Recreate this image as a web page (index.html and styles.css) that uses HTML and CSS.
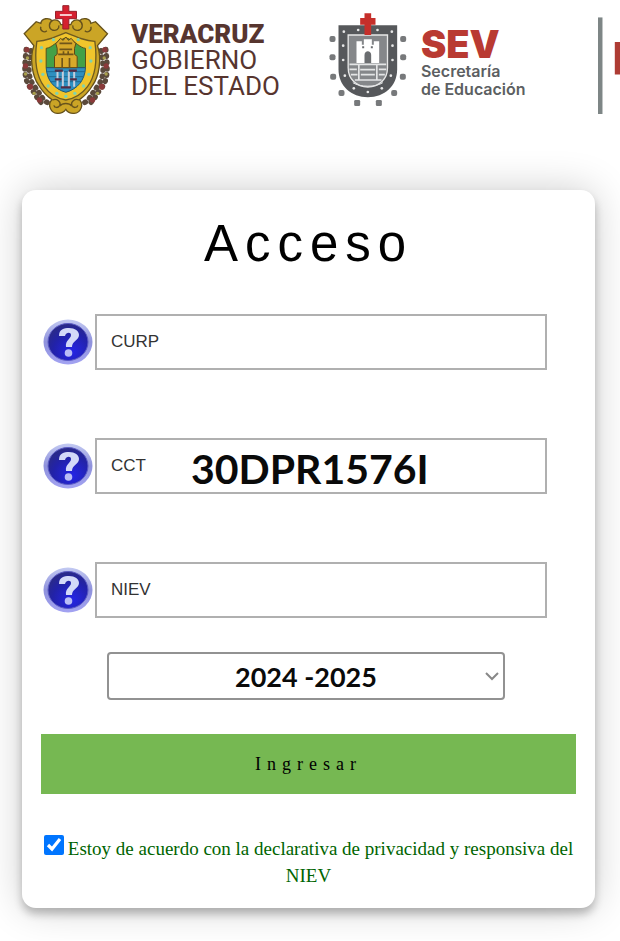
FILE: index.html
```html
<!DOCTYPE html>
<html lang="es">
<head>
	<meta charset="UTF-8">
	<meta name="viewport" content="width=device-width, initial-scale=1.0">
	<title>Acceso</title>
	<link rel="stylesheet" href="styles.css">
</head>
<body>
	<svg class="defs" aria-hidden="true">
		<defs>
			<radialGradient id="help_fill" cx="0.6" cy="0.75" r="0.8">
				<stop offset="0" stop-color="#2424e6"/>
				<stop offset="0.6" stop-color="#2222a8"/>
				<stop offset="1" stop-color="#2c2c80"/>
			</radialGradient>
			<linearGradient id="help_rim" x1="0" y1="0" x2="0" y2="1">
				<stop offset="0" stop-color="#c3caf2"/>
				<stop offset="0.5" stop-color="#8f92dc"/>
				<stop offset="1" stop-color="#a3a3f2"/>
			</linearGradient>
			<symbol id="help" viewBox="0 0 50 46">
				<ellipse cx="25" cy="23" rx="24.5" ry="22.5" fill="url(#help_rim)"/>
				<ellipse cx="25" cy="23" rx="20" ry="18.5" fill="url(#help_fill)" stroke="#5a5ac4"/>
				<path d="M16 17c0-7 5-8 10-8 6 0 10 3 10 7 0 5-7 6-7 12h-6c-1-7 5-8 5-12 0-3-5-3-6 1z" fill="#d3d9f8"/>
				<circle cx="25.500" cy="34" r="3.800" fill="#b9bdf6"/>
			</symbol>
		</defs>
	</svg>
	<header class="header">
		<svg class="crest_state" viewBox="60 12 272 336" role="img" aria-label="Escudo de Veracruz">
			<!-- side flowers -->
			<g fill="none" stroke="#5b4a3c" stroke-width="16" stroke-linecap="round" stroke-dasharray="2 17">
				<path d="M78 148C74 190 68 235 90 262S112 304 136 316"/>
				<path d="M317 148C321 190 327 235 305 262S283 304 259 316"/>
				<path d="M92 152C86 190 80 230 102 258S122 294 142 308"/>
				<path d="M303 152C309 190 315 230 293 258S273 294 253 308"/>
			</g>
			<g fill="#8a3a3a">
				<circle cx="80" cy="149" r="8"/><circle cx="76" cy="198" r="8"/><circle cx="90" cy="260" r="9"/><circle cx="118" cy="300" r="8"/>
				<circle cx="314" cy="149" r="8"/><circle cx="318" cy="198" r="8"/><circle cx="305" cy="260" r="9"/><circle cx="277" cy="300" r="8"/>
			</g>
			<g fill="#a9a04c">
				<circle cx="82" cy="174" r="5"/><circle cx="76" cy="222" r="5"/><circle cx="102" cy="280" r="5"/>
				<circle cx="312" cy="174" r="5"/><circle cx="318" cy="222" r="5"/><circle cx="292" cy="280" r="5"/>
			</g>
			<!-- frame -->
			<g fill="#cba526" stroke="#66521c" stroke-width="4">
				<path d="M72 101 108 65l14 5c2-16 24-18 34-8 10-6 24 0 26 12h30c2-12 16-18 26-12 10-10 32-8 34 8l14-5 36 36-30 36c14 40 4 92-14 118-12 20-26 34-40 44 14 14 4 40-16 41-12 1-20-4-25-12-6 8-14 13-26 12-20-1-30-27-16-41-14-10-28-24-40-44-18-26-28-78-14-118z"/>
				<path d="M122 80c-4 12 10 20 18 12M272 80c4 12-10 20-18 12M156 62c-12 8-10 24 0 28 12 4 22-4 20-14M238 62c12 8 10 24 0 28-12 4-22-4-20-14" fill="none"/>
				<path d="M157 300c14-6 26 6 22 16-4 9-16 8-18 0M237 300c-14-6-26 6-22 16 4 9 16 8 18 0M179 318c8-10 28-10 36 0" fill="none"/>
			</g>
			<path d="M110 124c28-2 48-10 87-26 39 16 59 24 87 26 8 58 2 104-22 136-18 24-40 36-65 40-25-4-47-16-65-40-24-32-30-78-22-136z" fill="#f0c52c" stroke="#6e5b20" stroke-width="4"/>
			<g fill="#7ed2b0">
				<circle cx="124" cy="143" r="5"/><circle cx="122" cy="183" r="5"/><circle cx="128" cy="223" r="5"/><circle cx="144" cy="258" r="5"/><circle cx="170" cy="280" r="5"/>
				<circle cx="270" cy="143" r="5"/><circle cx="272" cy="183" r="5"/><circle cx="266" cy="223" r="5"/><circle cx="250" cy="258" r="5"/><circle cx="224" cy="280" r="5"/>
				<circle cx="160" cy="119" r="5"/><circle cx="234" cy="119" r="5"/><circle cx="197" cy="289" r="5"/>
			</g>
			<path d="M138 203V145c18-2 28-20 59-32 31 12 41 30 59 32v58z" fill="#43a047" stroke="#54501c" stroke-width="3"/>
			<path d="M138 203h118c-2 38-24 64-59 74-35-10-57-36-59-74z" fill="#2f8fc0" stroke="#24566e" stroke-width="3"/>
			<path d="M140 215h114M143 230h108M150 245h94" stroke="#1e6b94" stroke-width="3"/>
			<path d="M163 203v-34l8-6v-18l-4-14 14-16 8 6 8-10 8 10 8-6 14 16-4 14v18l8 6v34z" fill="#d8a92a" stroke="#5f4717" stroke-width="3"/>
			<path d="M178 130h38M178 148h38M174 163h46M186 174v28M208 174v28M190 154v12M204 154v12" stroke="#705519" stroke-width="5"/>
			<path d="M172 216v44M222 216v44M188 214v50M206 214v50" stroke="#c5cddc" stroke-width="6"/>
			<path d="M164 212h24M206 212h24M164 238h20M210 238h20M182 262h30" stroke="#552c45" stroke-width="7"/>
			<path d="M188 17h18v17h23v22h-23v31h-18V56h-22V34h22z" fill="#d5202f" stroke="#96202a" stroke-width="3"/>
			<path d="M179 45h36" stroke="#f7c9cb" stroke-width="6"/>
		</svg>
		<p class="brand_state"><strong>VERACRUZ</strong><br>GOBIERNO<br>DEL ESTADO</p>
		<svg class="crest_sev" viewBox="54 28 236 288" role="img" aria-label="Escudo SEV">
			<g fill="#77797b">
				<rect x="58" y="100" width="18" height="18" rx="6"/><rect x="58" y="155" width="18" height="18" rx="6"/><rect x="60" y="213" width="18" height="18" rx="6"/>
				<rect x="85" y="262" width="18" height="18" rx="6"/><rect x="132" y="292" width="18" height="18" rx="4"/><rect x="197" y="292" width="18" height="18" rx="4"/>
				<rect x="243" y="262" width="18" height="18" rx="6"/><rect x="269" y="213" width="18" height="18" rx="6"/><rect x="270" y="155" width="18" height="18" rx="6"/><rect x="270" y="100" width="18" height="18" rx="6"/>
			</g>
			<path d="M85 68h176v132c0 50-38 84-88 84s-88-34-88-84z" fill="#56585b"/>
			<path d="M114 97h118v98c0 34-25 58-59 58s-59-24-59-58z" fill="#85878a" stroke="#e8e8e8" stroke-width="4"/>
			<path d="M139 181v-65h16v10h6v-16h24v16h6v-10h16v65z" fill="#fff"/>
			<path d="M163 181v-24c0-15 20-15 20 0v24z" fill="#6b6d70"/>
			<path d="M156 134h6M182 134h6" stroke="#6b6d70" stroke-width="6"/>
			<path d="M118 185h110M118 200h22M150 201h45M206 200h22M122 216h20M152 216h42M206 216h18M134 232h80M146 183v48M200 183v48" stroke="#e4e5e6" stroke-width="5"/>
			<path d="M128 240c20 14 70 14 90 0" fill="none" stroke="#e4e5e6" stroke-width="3"/>
			<g fill="#e8e8e8">
				<circle cx="101" cy="87" r="4"/><circle cx="144" cy="82" r="4"/><circle cx="202" cy="82" r="4"/><circle cx="245" cy="87" r="4"/>
				<circle cx="99" cy="129" r="4"/><circle cx="99" cy="172" r="4"/><circle cx="104" cy="219" r="4"/><circle cx="131" cy="257" r="4"/><circle cx="173" cy="268" r="4"/>
				<circle cx="247" cy="129" r="4"/><circle cx="247" cy="172" r="4"/><circle cx="242" cy="219" r="4"/><circle cx="215" cy="257" r="4"/>
			</g>
			<path d="M163 32h20v14h13v20h-13v31h-20V66h-13V46h13z" fill="#c52f2a"/>
		</svg>
		<p class="brand_sev"><strong>SEV</strong>Secretaría<br>de Educación</p>
		<svg class="brand_next" viewBox="0 0 20 108" preserveAspectRatio="xMinYMid slice" aria-hidden="true">
			<path d="M0 16h4v92H0z" fill="#7e8686"/>
			<path d="M15 38h45v29H15z" fill="#ae3c34"/>
		</svg>
	</header>

	<main class="card">
		<form class="form">
			<h1>Acceso</h1>
			<div class="row">
				<button type="button" class="help" aria-label="Ayuda CURP"><svg><use href="#help"/></svg></button>
				<div class="field">
					<label for="curp">CURP</label>
					<input type="text" id="curp">
				</div>
			</div>
			<div class="row">
				<button type="button" class="help" aria-label="Ayuda CCT"><svg><use href="#help"/></svg></button>
				<div class="field">
					<label for="cct">CCT</label>
					<input type="text" id="cct" value="30DPR1576I">
				</div>
			</div>
			<div class="row">
				<button type="button" class="help" aria-label="Ayuda NIEV"><svg><use href="#help"/></svg></button>
				<div class="field">
					<label for="niev">NIEV</label>
					<input type="text" id="niev">
				</div>
			</div>
			<div class="cycle">
				<select id="cycle" aria-label="Ciclo escolar">
					<option>2024 -2025</option>
				</select>
				<svg class="chevron" viewBox="0 0 14 9" aria-hidden="true"><path d="M1 1l6 6 6-6"/></svg>
			</div>
			<button type="submit" class="submit">Ingresar</button>
			<div class="terms">
				<input type="checkbox" id="terms" checked><label for="terms">Estoy de acuerdo con la declarativa de privacidad y responsiva del NIEV</label>
			</div>
		</form>
	</main>
</body>
</html>
```
FILE: styles.css
```css
* {
	box-sizing: border-box;
	margin: 0;
	padding: 0;
}
body {
	background: #fff;
	font-family: "Liberation Serif", serif;
}
.defs {
	display: block;
	width: 0;
	height: 0;
}

.header {
	display: flex;
	align-items: center;
	padding: 4px 0 0 20px;
}
.header > * {
	flex-shrink: 0;
}
.crest_state {
	width: 91px;
	height: 112px;
}
.brand_state {
	margin: 0 48px 0 20px;
	font: 26px/26px Roboto, sans-serif;
	color: #57352f;
}
.brand_state strong {
	font-weight: 900;
}
.crest_sev {
	width: 79px;
	height: 96px;
}
.brand_sev {
	margin: 4px 72px 0 14px;
	font: 600 16px/18px Inter, sans-serif;
	color: #5c5f62;
}
.brand_sev strong {
	display: block;
	font-size: 38px;
	line-height: 36px;
	font-weight: 900;
	color: #b93a32;
}
.header .brand_next {
	flex: 1 1 0;
	min-width: 0;
	max-width: 60px;
	height: 108px;
}

.card {
	margin: 74px 25px 32px 22px;
	padding: 24px 19px 19px;
	background: #fff;
	border-radius: 14px;
	box-shadow: 0 0 40px rgba(0, 0, 0, 0.2), 0 6px 8px rgba(0, 0, 0, 0.24);
}
.form {
	display: flex;
	flex-direction: column;
}
h1 {
	margin-bottom: 40px;
	font: 51px/60px "Liberation Sans", sans-serif;
	letter-spacing: 7px;
	text-align: center;
	color: #000;
}
.row {
	display: flex;
	align-items: center;
	gap: 2px;
	margin: 0 29px 68px 2px;
}
.help {
	border: 0;
	background: none;
	cursor: pointer;
}
.help svg {
	display: block;
	width: 50px;
	height: 46px;
}
.field {
	display: flex;
	flex: 1;
	align-items: center;
	min-width: 0;
	height: 56px;
	padding: 0 14px;
	border: 2px solid #b0b0b0;
}
.field label {
	width: 80px;
	font: 17px "Liberation Sans", sans-serif;
	color: #333;
}
.field input {
	flex: 1;
	min-width: 0;
	height: 52px;
	padding-top: 4px;
	border: 0;
	outline: 0;
	background: none;
	font: bold 41px Lato, sans-serif;
	color: #0a0a0a;
}

.cycle {
	display: grid;
	align-items: center;
	margin: -34px 71px 34px 66px;
}
.cycle > * {
	grid-area: 1 / 1;
}
.cycle select {
	appearance: none;
	width: 100%;
	height: 48px;
	padding: 0 8px;
	border: 2px solid #929292;
	border-radius: 4px;
	background: #fff;
	font: bold 27px Lato, sans-serif;
	color: #0a0a0a;
	text-align: center;
	text-align-last: center;
}
.chevron {
	justify-self: end;
	width: 14px;
	height: 9px;
	margin-right: 6px;
	fill: none;
	stroke: #888;
	stroke-width: 2;
	pointer-events: none;
}

.submit {
	height: 60px;
	border: 0;
	background: #76b852;
	font: 18px "Liberation Serif", serif;
	letter-spacing: 6px;
	color: #000;
	cursor: pointer;
}
.terms {
	margin-top: 41px;
	font-size: 19px;
	line-height: 27px;
	text-align: center;
	color: #006400;
}
.terms input {
	width: 20px;
	height: 20px;
	margin-right: 4px;
	accent-color: #0075ff;
}
```
